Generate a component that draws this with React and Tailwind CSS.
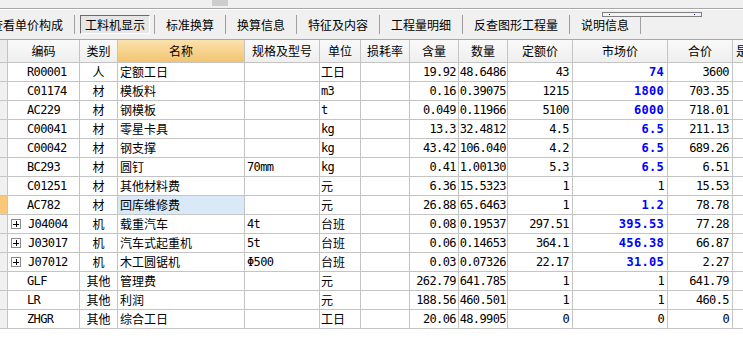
const cjk = "font-['SimSun','Noto_Sans_CJK_SC',sans-serif]"
const mono = "font-['DejaVu_Sans_Mono',monospace] tracking-[-0.6px]"

const tabs = ['标准换算', '换算信息', '特征及内容', '工程量明细', '反查图形工程量', '说明信息']

const columns = [
  { label: '', w: 'bg-[#f0f0f0]' },
  { label: '编码' },
  { label: '类别' },
  { label: '名称', hot: true },
  { label: '规格及型号' },
  { label: '单位' },
  { label: '损耗率' },
  { label: '含量' },
  { label: '数量' },
  { label: '定额价' },
  { label: '市场价' },
  { label: '合价' },
  { label: '是' },
]

const rows = [
  ['R00001', '人', '定额工日', '', '工日', '19.92', '48.6486', '43', '74', '3600', true],
  ['C01174', '材', '模板料', '', 'm3', '0.16', '0.39075', '1215', '1800', '703.35', true],
  ['AC229', '材', '钢模板', '', 't', '0.049', '0.11966', '5100', '6000', '718.01', true],
  ['C00041', '材', '零星卡具', '', 'kg', '13.3', '32.4812', '4.5', '6.5', '211.13', true],
  ['C00042', '材', '钢支撑', '', 'kg', '43.42', '106.040', '4.2', '6.5', '689.26', true],
  ['BC293', '材', '圆钉', '70mm', 'kg', '0.41', '1.00130', '5.3', '6.5', '6.51', true],
  ['C01251', '材', '其他材料费', '', '元', '6.36', '15.5323', '1', '1', '15.53', false],
  ['AC782', '材', '回库维修费', '', '元', '26.88', '65.6463', '1', '1.2', '78.78', true],
  ['J04004', '机', '载重汽车', '4t', '台班', '0.08', '0.19537', '297.51', '395.53', '77.28', true],
  ['J03017', '机', '汽车式起重机', '5t', '台班', '0.06', '0.14653', '364.1', '456.38', '66.87', true],
  ['J07012', '机', '木工圆锯机', 'Φ500', '台班', '0.03', '0.07326', '22.17', '31.05', '2.27', true],
  ['GLF', '其他', '管理费', '', '元', '262.79', '641.785', '1', '1', '641.79', false],
  ['LR', '其他', '利润', '', '元', '188.56', '460.501', '1', '1', '460.5', false],
  ['ZHGR', '其他', '综合工日', '', '工日', '20.06', '48.9905', '0', '0', '0', false],
]

const cell = 'h-[19px] border-r border-b border-[#c4c4c4] flex items-center overflow-hidden whitespace-nowrap'

function isLatin(s) {
  return /^[\x00-\x7fΦ]*$/.test(s)
}

function PlusBox() {
  return (
    <span className="w-[10px] h-[10px] border border-[#8a8a8a] bg-white flex items-center justify-center mr-[7px] ml-[3px]">
      <svg width="8" height="8" viewBox="0 0 8 8">
        <path d="M1 4h6M4 1v6" stroke="#000" strokeWidth="1" shapeRendering="crispEdges" />
      </svg>
    </span>
  )
}

export default function App() {
  return (
    <div className={`w-[743px] h-[349px] overflow-hidden bg-white relative ${cjk} text-[12px] text-black`}>
      {/* top strip */}
      <div className="h-[8px] bg-[#f0f0f0] relative">
        <div className="absolute left-[212px] top-0 w-[16px] h-[6px] bg-[#cdcdcd]" />
      </div>
      <div className="h-[1px] bg-[#a8a8a8]" />
      <div className="h-[1px] bg-white" />

      {/* tab bar */}
      <div className="h-[30px] bg-[#f0f0f0] border-b border-[#a8a8a8] flex items-center relative">
        <span className="ml-[-9px] pr-[11px] leading-none">查看单价构成</span>
        <span className="w-[1px] h-[19px] bg-[#a0a0a0]" />
        <span className="pl-[5px] pr-[4px]">
          <span className="h-[19px] px-[4px] flex items-center border border-t-[#6c6c6c] border-l-[#6c6c6c] border-r-white border-b-white bg-[#e6e6e6] bg-[radial-gradient(#d2d2d2_0.6px,transparent_0.7px)] bg-[length:2px_2px] leading-none">
            工料机显示
          </span>
        </span>
        {tabs.map((t) => (
          <div key={t} className="flex items-center">
            <span className="w-[1px] h-[19px] bg-[#a0a0a0]" />
            <span className="px-[11px] leading-none">{t}</span>
          </div>
        ))}
        <span className="w-[1px] h-[19px] bg-[#a0a0a0]" />
        <div className="absolute left-[602px] top-[2px] w-[100px] h-[5px] border border-[#808080] bg-[#f4f4f4]">
          <span className="absolute left-[6px] top-[1px] w-[1px] h-[1px] bg-[#2020c0]" />
          <span className="absolute left-[91px] top-[1px] w-[1px] h-[1px] bg-[#2020c0]" />
        </div>
      </div>

      {/* grid */}
      <div className="grid grid-cols-[8px_72px_38px_127px_75px_41px_49px_49px_49px_65px_95px_65px_60px] w-[793px]">
        {columns.map((c, i) => (
          <div
            key={i}
            className={`h-[23px] border-r border-b border-[#c4c4c4] flex items-center justify-center whitespace-nowrap overflow-hidden ${
              c.hot
                ? 'bg-gradient-to-b from-[#fbe2ad] to-[#f2c46f]'
                : i === 0
                ? 'bg-[#ececec]'
                : 'bg-gradient-to-b from-[#fafafa] to-[#efefef]'
            } ${i === 12 ? 'justify-start pl-[3px]' : ''}`}
          >
            {c.label}
          </div>
        ))}

        {rows.map((r, ri) => {
          const [code, kind, name, spec, unit, qty, amount, base, market, total, hl] = r
          const selected = ri === 7
          const expandable = kind === '机'
          return [
            <div key={`${ri}-0`} className={`${cell} ${selected ? 'bg-[#f9c878]' : 'bg-[#f0f0f0]'}`} />,
            <div key={`${ri}-1`} className={`${cell} ${expandable ? '' : 'pl-[19px]'}`}>
              {expandable && <PlusBox />}
              <span className={mono}>{code}</span>
            </div>,
            <div key={`${ri}-2`} className={`${cell} justify-center`}>{kind}</div>,
            <div key={`${ri}-3`} className={`${cell} pl-[2px] ${selected ? 'bg-[#d9e9f8]' : ''}`}>{name}</div>,
            <div key={`${ri}-4`} className={`${cell} pl-[2px]`}>
              <span className={mono}>{spec}</span>
            </div>,
            <div key={`${ri}-5`} className={`${cell} pl-[1px]`}>
              <span className={isLatin(unit) ? mono : ''}>{unit}</span>
            </div>,
            <div key={`${ri}-6`} className={cell} />,
            <div key={`${ri}-7`} className={`${cell} justify-end pr-[2px]`}>
              <span className={mono}>{qty}</span>
            </div>,
            <div key={`${ri}-8`} className={`${cell} justify-end pr-[1px]`}>
              <span className={mono}>{amount}</span>
            </div>,
            <div key={`${ri}-9`} className={`${cell} justify-end pr-[3px]`}>
              <span className={mono}>{base}</span>
            </div>,
            <div key={`${ri}-10`} className={`${cell} justify-end pr-[3px]`}>
              <span
                className={
                  hl
                    ? "font-['DejaVu_Sans_Mono',monospace] font-bold tracking-[0.3px] text-[#0000ff]"
                    : mono
                }
              >
                {market}
              </span>
            </div>,
            <div key={`${ri}-11`} className={`${cell} justify-end pr-[3px]`}>
              <span className={mono}>{total}</span>
            </div>,
            <div key={`${ri}-12`} className={cell} />,
          ]
        })}
      </div>
    </div>
  )
}
